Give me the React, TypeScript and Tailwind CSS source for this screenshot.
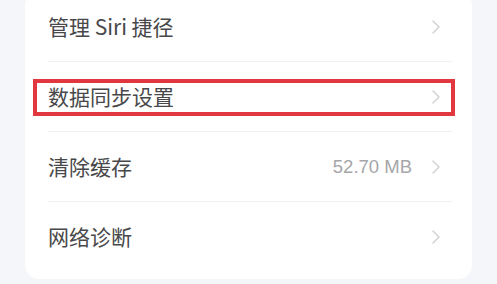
import { ChevronRight } from 'lucide-react'

type Row = { label: string; value?: string; highlight?: boolean }

const rows: Row[] = [
  { label: '管理 Siri 捷径' },
  { label: '数据同步设置', highlight: true },
  { label: '清除缓存', value: '52.70 MB' },
  { label: '网络诊断' },
]

export default function App() {
  return (
    <div className="h-[284px] w-[497px] overflow-hidden bg-[#f4f6f9] px-[25px] font-['Noto_Sans_CJK_SC','Noto_Sans',sans-serif]">
      <div className="-mt-[8px] rounded-[14px] bg-white pb-[7px]">
        {rows.map((row, i) => (
          <div key={row.label} className="relative">
            <div
              className={
                'ml-[23px] mr-[20px] flex h-[70px] items-center pr-[4px] ' +
                (i < rows.length - 1 ? 'border-b border-[#f1f1f3]' : '')
              }
            >
              <span className="text-[21px] text-[#48484a]">{row.label}</span>
              <span className="flex-1" />
              {row.value && (
                <span className="mr-[12px] font-['Liberation_Sans',sans-serif] text-[18.5px] text-[#a6a6a9]">{row.value}</span>
              )}
              <ChevronRight className="h-[24px] w-[24px] text-[#d4d4d7]" strokeWidth={1.6} />
            </div>
            {row.highlight && (
              <div className="absolute left-[8px] right-[17px] top-[17px] h-[37px] border-[4px] border-[#e0383e]" />
            )}
          </div>
        ))}
      </div>
    </div>
  )
}
